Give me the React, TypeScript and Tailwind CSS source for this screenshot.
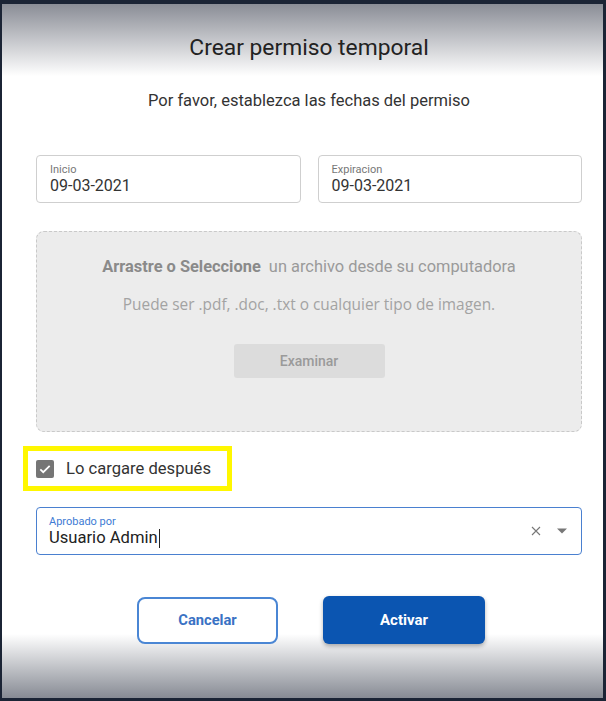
import React from 'react';

// Campo de fecha con etiqueta flotante
const DateField = ({ label, value }: { label: string; value: string }) => (
  <div className="flex-1 h-[48px] rounded-[4px] border border-[#cfcfcf] px-[13px] pt-[7px]">
    <div className="text-[11px] leading-[13px] text-[#777]">{label}</div>
    <div className="text-[16px] leading-[20px] text-[#333]">{value}</div>
  </div>
);

export default function App() {
  return (
    <div className="w-[606px] h-[701px] bg-[#1b2435] pt-[4px] pl-[2px] pr-[3px] pb-[3px] font-['Roboto',sans-serif]">
      <div className="h-full flex flex-col pl-[34px] pr-[21px] pt-[29px] bg-[linear-gradient(to_bottom,#8a8d96_0px,#ffffff_72px,#ffffff_630px,#878b94_100%)]">
        {/* Encabezado */}
        <h1 className="text-center text-[22.8px] leading-[30px] text-[#222]">Crear permiso temporal</h1>
        <p className="mt-[28px] text-center text-[16.5px] leading-[20px] text-[#333]">
          Por favor, establezca las fechas del permiso
        </p>

        {/* Fechas */}
        <div className="mt-[44px] flex gap-[17px]">
          <DateField label="Inicio" value="09-03-2021" />
          <DateField label="Expiracion" value="09-03-2021" />
        </div>

        {/* Zona de carga de archivos */}
        <div className="mt-[28px] h-[201px] rounded-[8px] border border-dashed border-[#c9c9c9] bg-[#ececec] flex flex-col items-center pt-[25px]">
          <div className="text-[16.4px] leading-[20px] text-[#9a9a9a]">
            <span className="font-bold text-[#8a8a8a]">Arrastre o Seleccione</span>&nbsp; un archivo desde su computadora
          </div>
          <div className="mt-[18px] text-[15.4px] leading-[20px] text-[#a3a3a3] font-['Open_Sans',sans-serif]">
            Puede ser .pdf, .doc, .txt o cualquier tipo de imagen.
          </div>
          <button className="mt-[29px] w-[151px] h-[34px] rounded-[3px] bg-[#dcdcdc] text-[14px] font-medium text-[#9a9a9a]">
            Examinar
          </button>
        </div>

        {/* Casilla resaltada */}
        <div className="mt-[14px] -ml-[13px] w-[209px] h-[45px] border-[5px] border-[#fff700] flex items-center pl-[8px] gap-[12px]">
          <div className="w-[18px] h-[18px] rounded-[2px] bg-[#757575] flex items-center justify-center">
            <svg width="14" height="14" viewBox="0 0 24 24" fill="none" stroke="#fff" strokeWidth="3">
              <path d="M4 12.5l5 5L20 6.5" />
            </svg>
          </div>
          <span className="text-[16.6px] leading-[20px] text-[#333]">Lo cargare después</span>
        </div>

        {/* Selector de aprobador */}
        <div className="mt-[16px] h-[48px] rounded-[4px] border-[1.5px] border-[#4a80d0] flex items-center pl-[12px] pr-[14px]">
          <div className="flex-1 pt-[1px]">
            <div className="text-[11px] leading-[13px] text-[#3d7bd4]">Aprobado por</div>
            <div className="flex items-center text-[16.6px] leading-[20px] text-[#222]">
              Usuario Admin<span className="ml-[1px] w-[1.5px] h-[19px] bg-[#222]" />
            </div>
          </div>
          <svg width="12" height="12" viewBox="0 0 24 24" fill="none" stroke="#777" strokeWidth="2.2" className="mr-[15px]">
            <path d="M4 4l16 16M20 4L4 20" />
          </svg>
          <svg width="10" height="6" viewBox="0 0 10 5" fill="#777">
            <path d="M0 0h10L5 5z" />
          </svg>
        </div>

        {/* Acciones */}
        <div className="mt-[41px] flex justify-center gap-[45px] pl-[4px]">
          <button className="w-[141px] h-[47px] mt-[1px] rounded-[8px] border-2 border-[#4a86d4] bg-white text-[14.7px] font-bold text-[#3a72c4]">
            Cancelar
          </button>
          <button className="w-[162px] h-[48px] rounded-[6px] bg-[#0b55b1] text-[15px] font-bold text-white shadow-[0_2px_4px_rgba(0,0,0,0.3)]">
            Activar
          </button>
        </div>
      </div>
    </div>
  );
}
